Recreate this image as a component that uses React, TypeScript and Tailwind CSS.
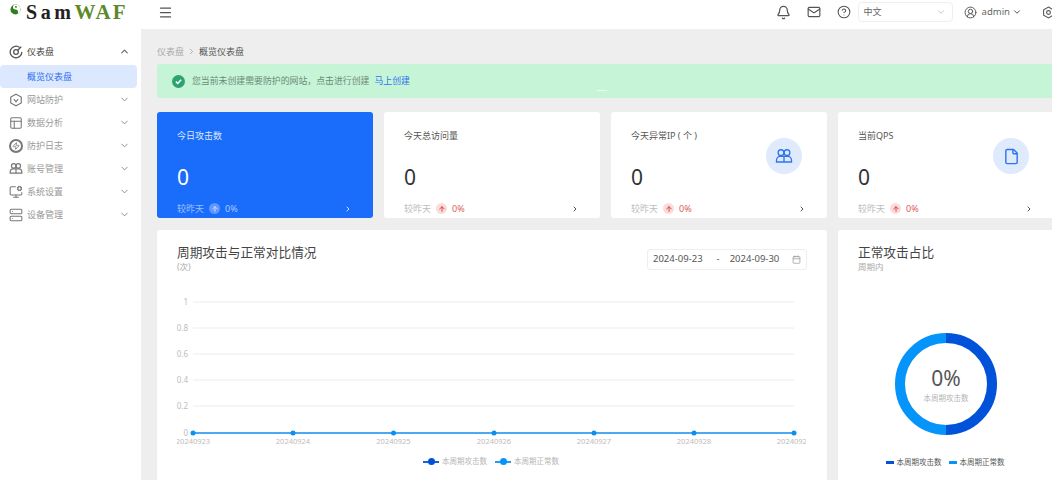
import {
  Bell,
  ChevronDown,
  ChevronRight,
  ChevronUp,
  CircleHelp,
  CircleUserRound,
  Calendar,
  File,
  Mail,
  Menu,
  MonitorCog,
  PanelsTopLeft,
  Server,
  Zap,
  ArrowUp,
} from "lucide-react";
import type { ReactNode } from "react";

const cjk = "font-['Noto_Sans','Noto_Sans_CJK_SC',sans-serif]";

function HexShield({ size = 14 }: { size?: number }) {
  return (
    <svg width={size} height={size} viewBox="0 0 24 24" fill="none" stroke="currentColor" strokeWidth="2">
      <path d="M12 2l9 5v10l-9 5-9-5V7z" />
      <path d="M8.5 10.5L12 15l3.5-4.5" />
    </svg>
  );
}

function DashIcon({ size = 14 }: { size?: number }) {
  return (
    <svg width={size} height={size} viewBox="0 0 24 24" fill="none" stroke="currentColor" strokeWidth="2.200">
      <path d="M18.500 4.500A10 10 0 1 0 22 12" />
      <circle cx="12" cy="12" r="4" />
      <path d="M15 9l6-6" />
    </svg>
  );
}

function BoltCircle({ size = 14 }: { size?: number }) {
  return (
    <span className="relative flex items-center justify-center rounded-full border-2 border-[#777]" style={{ width: size, height: size }}>
      <Zap size={size - 6} strokeWidth={2.4} />
    </span>
  );
}

function Group({ size = 16, color = "currentColor", width = 2 }: { size?: number; color?: string; width?: number }) {
  return (
    <svg width={size} height={size} viewBox="0 0 24 24" fill="none" stroke={color} strokeWidth={width}>
      <circle cx="8" cy="7.5" r="3.8" />
      <circle cx="16" cy="7.5" r="3.8" />
      <path d="M2 20v-2.5c0-3 2.5-5 5-5h10c2.500 0 5 2 5 5V20z" />
      <path d="M12 12.500V20" />
    </svg>
  );
}

const menus: { label: string; icon: ReactNode }[] = [
  { label: "网站防护", icon: <HexShield /> },
  { label: "数据分析", icon: <PanelsTopLeft size={14} strokeWidth={1.8} /> },
  { label: "防护日志", icon: <BoltCircle /> },
  { label: "账号管理", icon: <Group size={15} /> },
  { label: "系统设置", icon: <MonitorCog size={14} strokeWidth={1.8} /> },
  { label: "设备管理", icon: <Server size={14} strokeWidth={1.8} /> },
];

function Sidebar() {
  return (
    <aside className="flex w-[141px] shrink-0 flex-col bg-white pt-[11px] pr-[4px]">
      <div className="flex h-[23px] items-center pr-[7px] pl-[9px] text-[#444]">
        <span className="text-[#555]">
          <DashIcon />
        </span>
        <span className="ml-[4px] text-[9px]">仪表盘</span>
        <ChevronUp size={11} strokeWidth={2.4} className="ml-auto text-[#666]" />
      </div>
      <div className="mt-[2px] flex h-[23px] items-center rounded-sm bg-[#dbe8fe] pl-[27px] text-[9px] text-[#2f6fee]">概览仪表盘</div>
      {menus.map((m) => (
        <div key={m.label} className="flex h-[23px] items-center pr-[7px] pl-[9px] text-[#999]">
          <span className="flex w-[14px] justify-center text-[#777]">{m.icon}</span>
          <span className="ml-[4px] text-[9px]">{m.label}</span>
          <ChevronDown size={11} strokeWidth={2} className="ml-auto text-[#888]" />
        </div>
      ))}
    </aside>
  );
}

function Header() {
  return (
    <header className="flex h-[29px] shrink-0 items-center bg-white pb-[5px] text-[#555]">
      <div className="flex w-[158px] items-center pl-[10px]">
        <svg width="11" height="11" viewBox="0 0 12 12" className="mb-[6px]">
          <circle cx="6" cy="6" r="5.500" fill="#2f7d1f" />
          <path d="M6 .5a5.500 5.500 0 0 1 0 11 2.700 2.700 0 0 0 0-5.500 2.700 2.700 0 0 1 0-5.500z" fill="#fff" />
          <circle cx="6.500" cy="3.200" r="1" fill="#2f7d1f" />
        </svg>
        <span className="ml-[5px] font-['Liberation_Serif',serif] text-[20px] leading-none font-bold tracking-[3.600px] text-[#222]">Sam</span>
        <span className="font-['Liberation_Serif',serif] text-[21px] leading-none font-bold tracking-[2.200px] text-[#5c8a2a]">WAF</span>
      </div>
      <Menu size={15} strokeWidth={2} className="text-[#555]" />
      <div className="ml-auto flex items-center">
        <Bell size={15} strokeWidth={2} />
        <Mail size={14} strokeWidth={2} className="ml-[16px]" />
        <CircleHelp size={14} strokeWidth={1.8} className="ml-[16px]" />
        <div className="ml-[7px] flex h-[20px] w-[95px] items-center rounded-sm border border-[#eee] pr-[6px] pl-[5px] text-[9px] text-[#666]">
          中文
          <ChevronDown size={10} className="ml-auto text-[#bbb]" />
        </div>
        <CircleUserRound size={13} strokeWidth={1.8} className="ml-[11px]" />
        <span className="ml-[5px] text-[9.500px] text-[#666]">admin</span>
        <ChevronDown size={10} strokeWidth={2.4} className="ml-[2px]" />
        <svg width="13" height="13" viewBox="0 0 24 24" fill="none" stroke="currentColor" strokeWidth="2" className="mr-[-3px] ml-[20px]">
          <path d="M12 2l9 5v10l-9 5-9-5V7z" />
          <circle cx="12" cy="12" r="3.500" />
        </svg>
      </div>
    </header>
  );
}

function Delta({ active }: { active?: boolean }) {
  return (
    <div className="flex h-[13px] items-center text-[9px]">
      <span className={active ? "text-[#9cc1ff]" : "text-[#bdbdbd]"}>较昨天</span>
      <span className={active ? "ml-[5px] flex h-[11px] w-[11px] items-center justify-center rounded-full bg-[#5f97ff] text-[#cfe0ff]" : "ml-[5px] flex h-[11px] w-[11px] items-center justify-center rounded-full bg-[#fbdcdc] text-[#d9443f]"}>
        <ArrowUp size={8} strokeWidth={3} />
      </span>
      <span className={active ? "ml-[5px] text-[#a9c8ff]" : "ml-[5px] text-[#d9605c]"}>0%</span>
      <ChevronRight size={8} strokeWidth={3} className={active ? "mr-[-1px] ml-auto text-[#cfe0ff]" : "mr-[-1px] ml-auto text-[#555]"} />
    </div>
  );
}

function StatCard({ title, active, icon }: { title: string; active?: boolean; icon?: ReactNode }) {
  return (
    <div className={active ? "relative flex h-[106px] w-[216px] shrink-0 flex-col rounded-[3px] bg-[#1a6cfb] pr-[22px] pl-[20px] text-white" : "relative flex h-[106px] w-[216px] shrink-0 flex-col rounded-[3px] bg-white pr-[22px] pl-[20px] text-[#333]"}>
      <div className={active ? "mt-[17px] text-[9px] leading-[13px] text-[#dbe8ff]" : "mt-[17px] text-[9px] leading-[13px] text-[#555]"}>{title}</div>
      <div className="mt-[20px] text-[21px] leading-[30px]">0</div>
      <div className="mt-auto mb-[3px]">
        <Delta active={active} />
      </div>
      {icon && (
        <span className="absolute top-[26px] right-[25px] flex h-[36px] w-[36px] items-center justify-center rounded-full bg-[#dfeafd] text-[#2f74ee]">
          {icon}
        </span>
      )}
    </div>
  );
}

const yTicks = [
  { label: "1", y: 72 },
  { label: "0.8", y: 98 },
  { label: "0.6", y: 124 },
  { label: "0.4", y: 150 },
  { label: "0.2", y: 176 },
];
const xTicks = [
  { label: "20240923", x: 36 },
  { label: "20240924", x: 136 },
  { label: "20240925", x: 236.500 },
  { label: "20240926", x: 337 },
  { label: "20240927", x: 437 },
  { label: "20240928", x: 537 },
  { label: "20240929", x: 637 },
];

function TrendChart() {
  return (
    <svg width="670" height="250" viewBox="0 0 670 250" className="block">
      <defs>
        <clipPath id="plot-clip">
          <rect x="20" y="0" width="629" height="250" />
        </clipPath>
      </defs>
      <g fontFamily="Noto Sans, sans-serif" fontSize="8" fill="#bcbcbc">
        {yTicks.map((t) => (
          <g key={t.label}>
            <line x1="36" x2="637" y1={t.y} y2={t.y} stroke="#ececec" />
            <text x="31" y={t.y + 3} textAnchor="end">{t.label}</text>
          </g>
        ))}
        <text x="31" y="206" textAnchor="end">0</text>
        <g clipPath="url(#plot-clip)" fontSize="7.500">
          {xTicks.map((t) => (
            <text key={t.label} x={t.x} y="214" textAnchor="middle">{t.label}</text>
          ))}
        </g>
      </g>
      <line x1="36" x2="637" y1="203" y2="203" stroke="#4aa8f5" strokeWidth="2" />
      {xTicks.map((t) => (
        <circle key={t.x} cx={t.x} cy="203" r="2.500" fill="#0d8ff0" />
      ))}
    </svg>
  );
}

function Donut() {
  return (
    <div className="relative mx-auto mt-[61px] h-[102px] w-[102px]">
      <svg width="102" height="102" viewBox="0 0 102 102" fill="none" strokeWidth="10">
        <path d="M51 5a46 46 0 0 1 0 92" stroke="#0052d9" />
        <path d="M51 97a46 46 0 0 1 0-92" stroke="#0594fa" />
      </svg>
      <div className="absolute inset-0 flex flex-col items-center pt-[32px]">
        <span className="text-[21px] leading-[26px] text-[#555]">0%</span>
        <span className="mt-[2px] text-[7.500px] leading-[10px] text-[#b5b5b5]">本周期攻击数</span>
      </div>
    </div>
  );
}

export default function App() {
  return (
    <div className={`flex h-[480px] w-[1052px] flex-col overflow-hidden bg-[#eeeeee] ${cjk}`}>
      <Header />
      <div className="flex min-h-0 flex-1">
        <Sidebar />
        <main className="min-w-0 flex-1 overflow-hidden pl-[16px]">
          <div className="w-[897px]">
            <div className="flex h-[35px] items-center pt-[10px] text-[9px]">
              <span className="text-[#aaa]">仪表盘</span>
              <ChevronRight size={9} className="mx-[3px] text-[#999]" />
              <span className="text-[#555]">概览仪表盘</span>
            </div>
            <div className="relative flex h-[34px] items-center rounded-[3px] bg-[#c6f4d7] pl-[15px] text-[8.900px] text-[#6b8a78]">
              <span className="flex h-[13px] w-[13px] items-center justify-center rounded-full bg-[#2ba471]">
                <svg width="9" height="9" viewBox="0 0 12 12" fill="none" stroke="#fff" strokeWidth="2"><path d="M2.500 6.200l2.500 2.500 4.500-5" /></svg>
              </span>
              <span className="ml-[7px]">您当前未创建需要防护的网站，点击进行创建</span>
              <span className="ml-[5px] text-[#2f74ee]">马上创建</span>
              <span className="absolute top-[26px] left-[440px] h-px w-[10px] bg-[#eefaf2]" />
            </div>
            <div className="mt-[14px] flex gap-[11px]">
              <StatCard title="今日攻击数" active />
              <StatCard title="今天总访问量" />
              <StatCard title="今天异常IP ( 个 )" icon={<Group size={18} width={1.800} />} />
              <StatCard title="当前QPS" icon={<File size={17} strokeWidth={2} />} />
            </div>
            <div className="mt-[12px] flex gap-[11px]">
              <section className="relative h-[260px] w-[670px] shrink-0 rounded-[3px] bg-white">
                <div className="flex items-start justify-between pt-[13px] pr-[20px] pl-[20px]">
                  <div>
                    <h2 className="text-[12.700px] leading-[18px] text-[#444]">周期攻击与正常对比情况</h2>
                    <p className="mt-[1px] text-[8.500px] leading-[10px] text-[#aaa]">(次)</p>
                  </div>
                  <div className="mt-[6px] flex h-[21px] w-[160px] items-center rounded-[3px] border border-[#eee] px-[5px] text-[9.500px] text-[#555]">
                    2024-09-23
                    <span className="mr-[10px] ml-[14px]">-</span>
                    2024-09-30
                    <Calendar size={9} className="ml-auto text-[#999]" />
                  </div>
                </div>
                <div className="absolute top-0 left-0">
                  <TrendChart />
                </div>
                <div className="absolute top-[226px] left-0 flex w-full items-center justify-center pr-[2px] text-[7.500px] text-[#b5b5b5]">
                  <span className="relative mr-[3px] flex h-[2px] w-[16px] items-center justify-center bg-[#1f5fd6]">
                    <span className="h-[7px] w-[7px] shrink-0 rounded-full bg-[#0052d9]" />
                  </span>
                  本周期攻击数
                  <span className="relative mr-[3px] ml-[8px] flex h-[2px] w-[16px] items-center justify-center bg-[#2a9af5]">
                    <span className="h-[7px] w-[7px] shrink-0 rounded-full bg-[#0594fa]" />
                  </span>
                  本周期正常数
                </div>
              </section>
              <section className="h-[260px] w-[216px] shrink-0 rounded-[3px] bg-white pt-[13px]">
                <div className="pl-[20px]">
                  <h2 className="text-[12.700px] leading-[18px] text-[#444]">正常攻击占比</h2>
                  <p className="mt-[1px] text-[8.500px] leading-[10px] text-[#aaa]">周期内</p>
                </div>
                <Donut />
                <div className="mt-[22px] flex items-center justify-center pr-[2px] text-[7.500px] text-[#555]">
                  <span className="mr-[3px] h-[2.500px] w-[8px] bg-[#0052d9]" />
                  本周期攻击数
                  <span className="mr-[3px] ml-[7px] h-[2.500px] w-[8px] bg-[#0594fa]" />
                  本周期正常数
                </div>
              </section>
            </div>
          </div>
        </main>
      </div>
    </div>
  );
}
